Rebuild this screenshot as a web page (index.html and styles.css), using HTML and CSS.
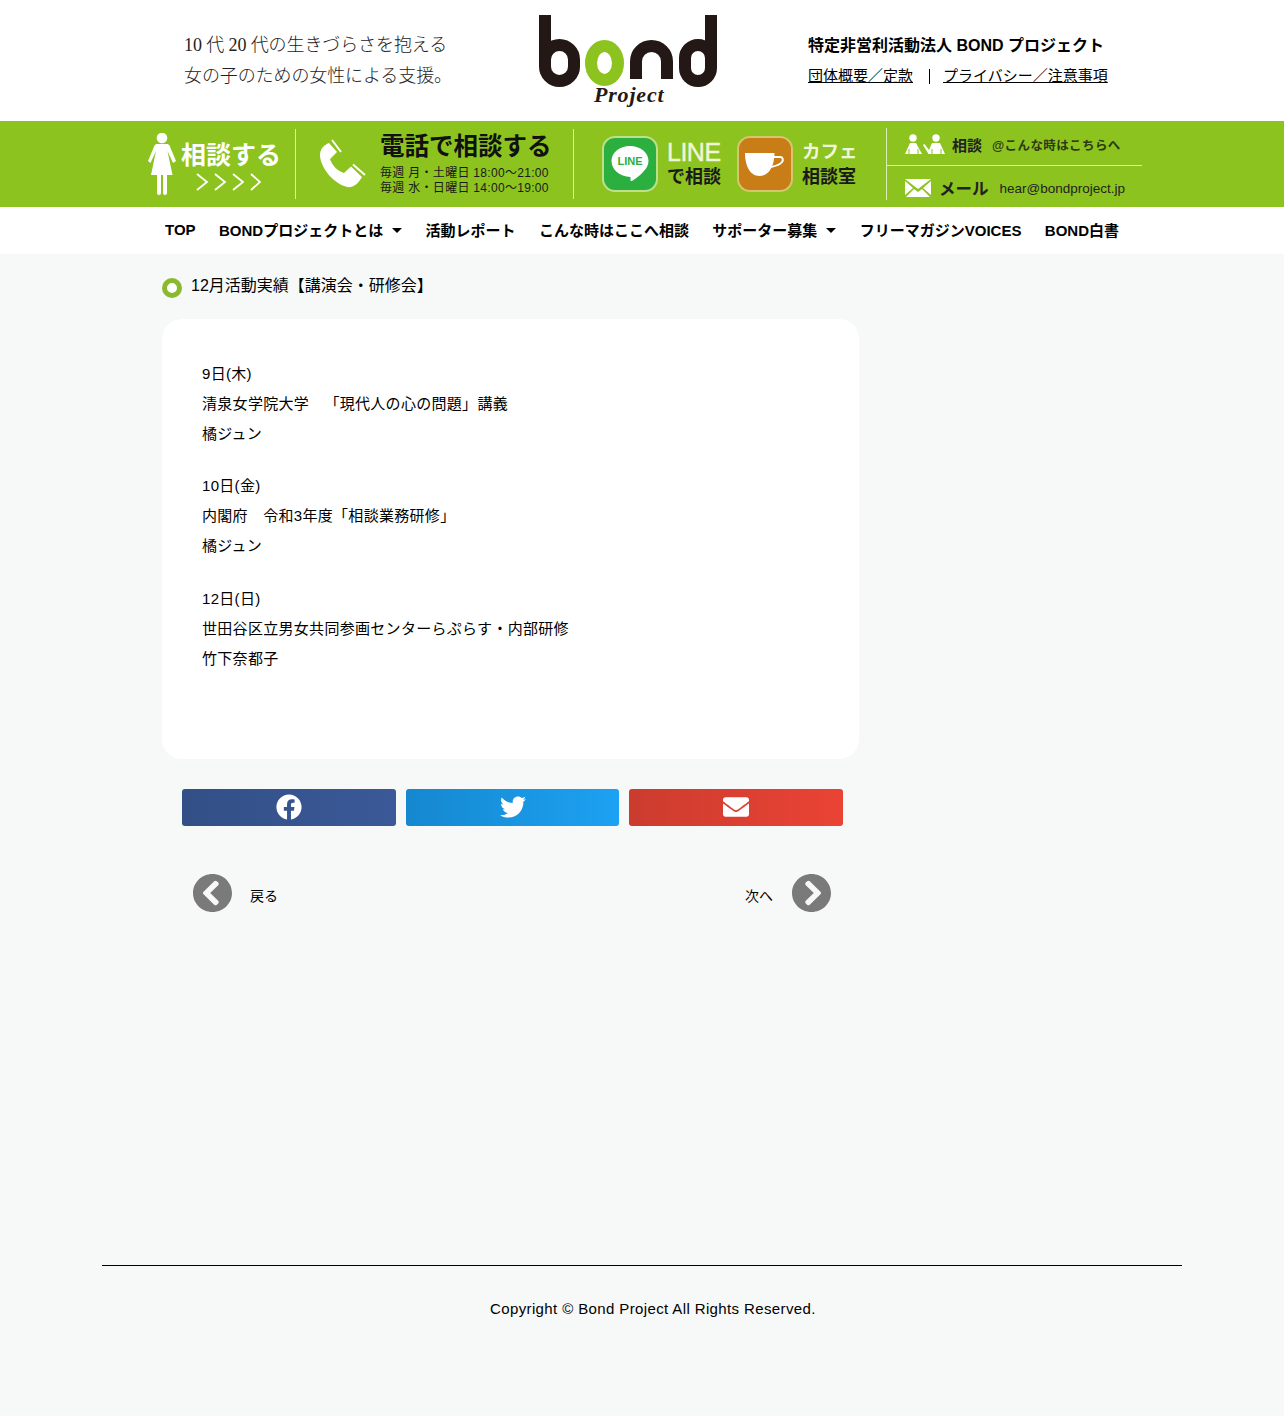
FILE: index.html
```html
<!DOCTYPE html>
<html lang="ja">
<head>
  <meta charset="UTF-8" />
  <title>12月活動実績【講演会・研修会】 | BOND Project</title>
  <link rel="stylesheet" href="styles.css">
</head>
<body>
  <header class="site-header">
    <div class="tagline">
      <p>10 代 20 代の生きづらさを抱える</p>
      <p>女の子のための女性による支援。</p>
    </div>
    <a class="logo" href="#">
      <svg class="logo-mark" viewBox="0 0 180 74" width="180" height="74" aria-label="bond">
        <g fill="none" stroke="#231815" stroke-width="12">
          <rect x="7" y="30" width="29" height="36" rx="14.500"/>
          <path d="M7 0V48"/>
          <path d="M98 64V46.500a15.500 15.500 0 0 1 31 0V64"/>
          <rect x="147" y="30" width="26" height="36" rx="13"/>
          <path d="M173 0V48"/>
        </g>
        <ellipse cx="66.500" cy="48" rx="13.500" ry="17" fill="none" stroke="#8cc31f" stroke-width="12"/>
      </svg>
      <span class="logo-sub">Project</span>
    </a>
    <div class="org">
      <p class="org-name">特定非営利活動法人 BOND プロジェクト</p>
      <p class="org-links"><a href="#">団体概要／定款</a><span class="org-sep"></span><a href="#">プライバシー／注意事項</a></p>
    </div>
  </header>

  <div class="banner">
    <div class="banner-inner">
      <a class="bn bn-consult" href="#">
        <svg class="woman" viewBox="0 0 28 62" width="28" height="62">
          <circle cx="14" cy="5" r="5.300" fill="#fff"/>
          <path fill="#fff" d="M9 11h10c1 0 2 .6 2.500 1.500L28 28l-3 2-5.500-12 5 24h-5.500v18a2 2 0 0 1-4 0V42h-2v18a2 2 0 0 1-4 0V42H3l5-24-5.500 12-2.500-2 6.500-15.500C7 11.600 8 11 9 11z"/>
        </svg>
        <span class="consult-text">
          <b>相談する</b>
          <svg viewBox="0 0 66 18" width="66" height="18">
            <path fill="none" stroke="#fff" stroke-width="1.800" d="M2 1l10 8-10 8M20 1l10 8-10 8M38 1l10 8-10 8M56 1l9 8-9 8"/>
          </svg>
        </span>
      </a>
      <a class="bn bn-tel" href="#">
        <svg class="tel-icon" viewBox="8 10 50 52" width="50" height="52">
          <path fill="#fff" d="M19 15C14 17 10 21 10 27 10 38 22 55 37 59 43 60 48 56 52 49L41 38.500 34 45C27 43 22 37 20 31L27 24z"/>
          <path fill="none" stroke="#fff" stroke-width="2" d="M22 12L31 24M43 36.500L55 47"/>
        </svg>
        <span class="tel-text">
          <b>電話で相談する</b>
          <small>毎週 月・土曜日 18:00〜21:00</small>
          <small>毎週 水・日曜日 14:00〜19:00</small>
        </span>
      </a>
      <div class="bn bn-apps">
        <a class="app" href="#">
          <span class="app-icon app-line">
            <svg viewBox="0 0 40 40" width="40" height="40">
              <path fill="#fff" d="M20 2c10.200 0 18.500 6.600 18.500 15 0 7-7 13.500-15 19-2 1.300-3 1.500-3-.3v-2.700C9.500 32.500 1.500 25.500 1.500 17 1.500 8.600 9.800 2 20 2z"/>
              <text class="line-mark" x="20" y="21" text-anchor="middle">LINE</text>
            </svg>
          </span>
          <span class="app-text"><em class="app-en">LINE</em><b>で相談</b></span>
        </a>
        <a class="app" href="#">
          <span class="app-icon app-cafe">
            <svg viewBox="0 0 40 25" width="40" height="25">
              <path fill="#fff" d="M0 1h29.500c0 12-5 23-15 23S0 13 0 1z"/>
              <path fill="none" stroke="#fff" stroke-width="2" d="M29 5h6c3 0 3.500 3 2 5-2 2.500-6 4-11 5"/>
            </svg>
          </span>
          <span class="app-text"><em>カフェ</em><b>相談室</b></span>
        </a>
      </div>
      <div class="bn-side">
        <a class="side-row" href="#">
          <svg class="people" viewBox="0 0 40 20" width="40" height="20">
            <g fill="#fff">
              <circle cx="8" cy="4" r="3.700"/>
              <path d="M5 9h6l6 11H0z"/>
              <circle cx="31" cy="4" r="3.700"/>
              <path d="M27 9h8l5 11H23.500L18 11l1.500-1 4.500 6z"/>
            </g>
            <path stroke="#8cc31f" d="M4 15v5M13 15v5M27 15v5M36 15v5"/>
          </svg>
          <b class="side-label">相談</b>
          <span class="side-note">@こんな時はこちらへ</span>
        </a>
        <a class="side-row side-mail" href="#">
          <svg class="mail" viewBox="0 0 26 18" width="26" height="18">
            <path fill="#fff" d="M0 0h26L13 10zM0 2l8 7-8 7zM26 2l-8 7 8 7zM9 10l4 3 4-3 8 8H1z"/>
          </svg>
          <b class="mail-label">メール</b>
          <span class="mail-addr">hear@bondproject.jp</span>
        </a>
      </div>
    </div>
  </div>

  <nav class="main-nav">
    <a href="#">TOP</a>
    <a href="#">BONDプロジェクトとは<i class="caret"></i></a>
    <a href="#">活動レポート</a>
    <a href="#">こんな時はここへ相談</a>
    <a href="#">サポーター募集<i class="caret"></i></a>
    <a href="#">フリーマガジンVOICES</a>
    <a href="#">BOND白書</a>
  </nav>

  <main class="content">
    <h1 class="post-title"><span class="dot"></span>12月活動実績【講演会・研修会】</h1>
    <article class="post-card">
      <p>9日(木)<br>清泉女学院大学　「現代人の心の問題」講義<br>橘ジュン</p>
      <p>10日(金)<br>内閣府　令和3年度「相談業務研修」<br>橘ジュン</p>
      <p>12日(日)<br>世田谷区立男女共同参画センターらぷらす・内部研修<br>竹下奈都子</p>
    </article>

    <div class="share">
      <a class="share-btn fb" href="#">
        <svg viewBox="0 0 512 512" width="26" height="26"><path fill="#fff" d="M504 256C504 119 393 8 256 8S8 119 8 256c0 123.780 90.690 226.380 209.250 245V327.690h-63V256h63v-54.640c0-62.150 37-96.480 93.670-96.480 27.140 0 55.520 4.840 55.520 4.840v61h-31.280c-30.800 0-40.410 19.120-40.410 38.730V256h68.780l-11 71.690h-57.780V501C413.310 482.380 504 379.780 504 256z"/></svg>
      </a>
      <a class="share-btn tw" href="#">
        <svg viewBox="0 0 512 512" width="26" height="26"><path fill="#fff" d="M459.370 151.716c.325 4.548.325 9.097.325 13.645 0 138.720-105.583 298.558-298.558 298.558-59.452 0-114.680-17.219-161.137-47.106 8.447.974 16.568 1.299 25.340 1.299 49.055 0 94.213-16.568 130.274-44.832-46.132-.975-84.792-31.188-98.112-72.772 6.498.974 12.995 1.624 19.818 1.624 9.421 0 18.843-1.300 27.614-3.573-48.081-9.747-84.143-51.980-84.143-102.985v-1.299c13.969 7.797 30.214 12.670 47.431 13.319-28.264-18.843-46.781-51.005-46.781-87.391 0-19.492 5.197-37.360 14.294-52.954 51.655 63.675 129.300 105.258 216.365 109.807-1.624-7.797-2.599-15.918-2.599-24.040 0-57.828 46.782-104.934 104.934-104.934 30.213 0 57.502 12.670 76.670 33.137 23.715-4.548 46.456-13.320 66.599-25.340-7.798 24.366-24.366 44.833-46.132 57.827 21.117-2.273 41.584-8.122 60.426-16.243-14.292 20.791-32.161 39.308-52.628 54.253z"/></svg>
      </a>
      <a class="share-btn mailto" href="#">
        <svg viewBox="0 0 512 512" width="26" height="26"><path fill="#fff" d="M502.300 190.800c3.900-3.100 9.700-.2 9.700 4.700V400c0 26.500-21.500 48-48 48H48c-26.500 0-48-21.500-48-48V195.600c0-5 5.700-7.800 9.700-4.700 22.400 17.400 52.100 39.500 154.100 113.600 21.100 15.400 56.700 47.800 92.200 47.600 35.700.3 72-32.800 92.300-47.600 102-74.100 131.600-96.300 154-113.700zM256 320c23.200.4 56.600-29.200 73.400-41.400 132.700-96.300 142.800-104.700 173.400-128.700 5.800-4.500 9.200-11.500 9.200-18.900v-19c0-26.500-21.500-48-48-48H48C21.500 64 0 85.500 0 112v19c0 7.400 3.400 14.300 9.200 18.900 30.600 23.900 40.700 32.400 173.400 128.700 16.800 12.200 50.200 41.800 73.400 41.400z"/></svg>
      </a>
    </div>

    <div class="pager">
      <a class="pager-link" href="#">
        <svg viewBox="8 8 496 496" width="39" height="38" preserveAspectRatio="none"><path fill="#7a7a7a" d="M256 504C119 504 8 393 8 256S119 8 256 8s248 111 248 248-111 248-248 248zM142.100 273l135.500 135.500c9.400 9.400 24.600 9.400 33.900 0l17-17c9.400-9.400 9.400-24.600 0-33.900L226.900 256l101.600-101.600c9.400-9.400 9.400-24.600 0-33.900l-17-17c-9.400-9.400-24.600-9.400-33.900 0L142.100 239c-9.400 9.400-9.400 24.600 0 34z"/></svg>
        <span class="pager-prev">戻る</span>
      </a>
      <a class="pager-link" href="#">
        <span class="pager-next">次へ</span>
        <svg viewBox="8 8 496 496" width="39" height="38" preserveAspectRatio="none"><path fill="#7a7a7a" d="M256 8c137 0 248 111 248 248S393 504 256 504 8 393 8 256 119 8 256 8zm113.900 231L234.400 103.500c-9.400-9.400-24.600-9.400-33.900 0l-17 17c-9.400 9.400-9.400 24.600 0 33.900L285.100 256 183.500 357.600c-9.400 9.400-9.400 24.600 0 33.900l17 17c9.400 9.400 24.600 9.400 33.900 0L369.900 273c9.400-9.400 9.400-24.600 0-34z"/></svg>
      </a>
    </div>
  </main>

  <footer class="site-footer">
    <p>Copyright © Bond Project All Rights Reserved.</p>
  </footer>
</body>
</html>
```

FILE: styles.css
```css
* {
  box-sizing: border-box;
}
html, body {
  margin: 0;
  padding: 0;
}
body {
  background-color: #f7f9f8;
  color: #000;
  font-family: "Liberation Sans", "Noto Sans CJK JP", sans-serif;
  font-size: 15px;
  min-height: 1416px;
  text-spacing-trim: space-all;
}
a {
  color: inherit;
  text-decoration: none;
}
p {
  margin: 0;
}

/* header */
.site-header {
  display: flex;
  height: 121px;
  background: #fff;
  padding-left: 184px;
}
.tagline {
  width: 354px;
  padding-top: 30px;
  font-family: "Liberation Serif", "Noto Sans CJK JP", serif;
  font-size: 18px;
  font-weight: 300;
  line-height: 31px;
  letter-spacing: -0.1px;
  color: #222;
}
.logo {
  width: 270px;
  padding-top: 15px;
  display: block;
  position: relative;
}
.logo-mark {
  display: block;
}
.logo-sub {
  position: absolute;
  left: 56px;
  top: 82px;
  font-family: "Liberation Serif", serif;
  font-style: italic;
  font-weight: bold;
  font-size: 22px;
  line-height: 26px;
  letter-spacing: 0.8px;
  color: #231815;
}
.org {
  padding-top: 35px;
}
.org-name {
  font-size: 16px;
  font-weight: bold;
  line-height: 22px;
}
.org-links {
  margin-top: 9px;
  display: flex;
  align-items: center;
  line-height: 20px;
}
.org-links a {
  text-decoration: underline;
}
.org-sep {
  width: 1px;
  height: 15px;
  background: #000;
  margin: 0 13px 0 16px;
}

/* green banner */
.banner {
  background: #8cc31f;
  height: 86px;
}
.banner-inner {
  display: flex;
  margin-left: 148px;
  width: 994px;
  height: 86px;
}
.bn {
  display: flex;
  align-items: center;
  height: 70px;
  margin-top: 8px;
  border-right: 1px solid #dcedb5;
}
.bn-consult {
  width: 148px;
  gap: 5px;
}
.consult-text {
  display: flex;
  flex-direction: column;
  align-items: center;
  color: #fff;
}
.consult-text b {
  font-size: 25px;
  line-height: 32px;
  margin-top: 2px;
  white-space: nowrap;
}
.consult-text svg {
  margin-top: 2px;
  margin-left: -6px;
}
.bn-tel {
  width: 278px;
  padding-left: 22px;
}
.tel-icon {
  flex: none;
}
.tel-text {
  display: flex;
  flex-direction: column;
  margin-left: 12px;
  color: #1a1a1a;
  white-space: nowrap;
}
.tel-text b {
  font-size: 24.500px;
  line-height: 28px;
  color: #111;
  margin-bottom: 5px;
}
.tel-text small {
  font-size: 12px;
  line-height: 15px;
  letter-spacing: 0.3px;
}
.bn-apps {
  width: 313px;
  padding-left: 28px;
  gap: 16px;
}
.app {
  display: flex;
  align-items: center;
  gap: 9px;
}
.app-icon {
  width: 56px;
  height: 56px;
  border-radius: 13px;
  display: flex;
  align-items: center;
  justify-content: center;
}
.app-line {
  background: #2bb040;
  border: 2px solid #bfe08a;
}
.app-cafe {
  background: #c97d16;
  border: 2px solid #d5c66f;
}
.line-mark {
  font-size: 11px;
  font-weight: bold;
  fill: #2bb040;
}
.app-text {
  display: flex;
  flex-direction: column;
  white-space: nowrap;
  line-height: 24px;
}
.app-text em {
  font-style: normal;
  font-weight: bold;
  font-size: 18.500px;
  color: #eff7d8;
}
.app-text .app-en {
  font-size: 25px;
  font-weight: normal;
  letter-spacing: -0.5px;
  -webkit-text-stroke: 0.4px #eff7d8;
}
.app-text b {
  font-size: 18px;
  color: #1a1a1a;
  padding-top: 1px;
}
.bn-side {
  width: 256px;
  margin-top: 7px;
  height: 72px;
  border-left: 1px solid #dcedb5;
  display: flex;
  flex-direction: column;
  margin-left: -1px;
}
.side-row {
  height: 34px;
  display: flex;
  align-items: center;
  padding-left: 18px;
  white-space: nowrap;
  color: #222;
}
.side-row:first-child {
  height: 38px;
  border-bottom: 1px solid #dcedb5;
  padding-bottom: 5px;
}
.side-mail {
  padding-top: 10px;
}
.people {
  margin-right: 7px;
}
.side-label {
  font-size: 15px;
  margin-right: 10px;
}
.side-note {
  font-size: 12.500px;
  font-weight: bold;
  letter-spacing: 0.4px;
  color: #2d3a12;
}
.mail {
  margin-right: 8px;
}
.mail-label {
  font-size: 16.500px;
  margin-right: 11px;
}
.mail-addr {
  font-size: 13.500px;
}

/* nav */
.main-nav {
  background: #fff;
  height: 47px;
  display: flex;
  justify-content: flex-start;
  align-items: center;
  gap: 23.400px;
  padding: 0 0 3px 165px;
  font-weight: bold;
  white-space: nowrap;
}
.caret {
  display: inline-block;
  width: 0;
  height: 0;
  border-left: 5px solid transparent;
  border-right: 5px solid transparent;
  border-top: 5px solid #000;
  margin-left: 9px;
  vertical-align: 3px;
}

/* post */
.content {
  width: 697px;
  margin-left: 162px;
}
.post-title {
  margin: 0;
  height: 65px;
  padding-top: 21px;
  display: flex;
  align-items: flex-start;
  font-size: 16px;
  font-weight: normal;
  line-height: 22px;
}
.dot {
  width: 20px;
  height: 20px;
  border: 5px solid #8ab92d;
  border-radius: 50%;
  background: #fff;
  margin: 3px 9px 0 0;
}
.post-card {
  background: #fff;
  border-radius: 20px;
  height: 440px;
  padding: 40px;
  line-height: 30px;
  letter-spacing: 0.3px;
}
.post-card p {
  margin-bottom: 22.400px;
}
.share {
  display: flex;
  gap: 10px;
  width: 661px;
  margin: 30px 0 0 20px;
}
.share-btn {
  flex: 1;
  height: 37px;
  padding-bottom: 2px;
  border-radius: 3px;
  display: flex;
  align-items: center;
  justify-content: center;
}
.fb {
  background: linear-gradient(90deg, #324f86, #3b5998);
}
.tw {
  background: linear-gradient(90deg, #1588cf, #1da1f2);
}
.mailto {
  background: linear-gradient(90deg, #cb3c2e, #ea4335);
}
.pager {
  display: flex;
  justify-content: space-between;
  margin: 48px 0 0 31px;
  width: 638px;
}
.pager-link {
  display: flex;
  align-items: center;
  font-size: 14px;
}
.pager-prev {
  margin: 3px 0 0 18px;
}
.pager-next {
  margin: 3px 19px 0 0;
}

/* footer */
.site-footer {
  margin: 353px 102px 0;
  border-top: 1px solid #000;
  padding: 32px 0 0 388px;
  letter-spacing: 0.38px;
  line-height: 22px;
}
```
